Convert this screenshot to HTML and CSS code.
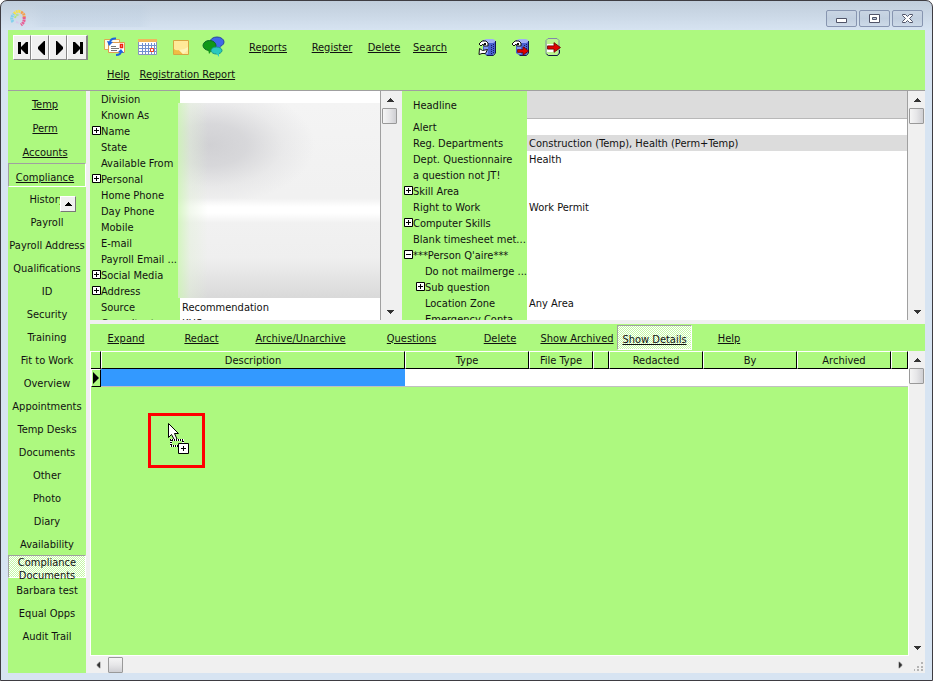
FILE: index.html
```html
<!DOCTYPE html>
<html lang="en">
<head>
<meta charset="utf-8">
<title>Compliance Documents</title>
<link rel="stylesheet" href="styles.css">
</head>
<body>
<svg class="defs" width="0" height="0" aria-hidden="true">
  <symbol id="up" viewBox="0 0 7 4"><path d="M3 0h1v1h1v1h1v1h1v1H0V3h1V2h1V1h1z"/></symbol>
  <symbol id="plus" viewBox="0 0 9 9"><path fill="#fff" stroke="#000" d="M.5.5h8v8h-8z"/><path d="M2 4h5v1H2zM4 2h1v5H4z"/></symbol>
  <symbol id="minus" viewBox="0 0 9 9"><path fill="#fff" stroke="#000" d="M.5.5h8v8h-8z"/><path d="M2 4h5v1H2z"/></symbol>
  <symbol id="db" viewBox="0 0 18 18">
    <path fill="#4860d0" d="M5 2h12v13l-2 2H8l-3-2z"/>
    <path fill="#8098f4" d="M6 4h4v12H8l-2-1z"/>
    <path fill="#a0b0f4" d="M6 2l2-1h7l2 1v2l-2 1H8L6 4z"/>
    <path stroke="#101850" fill="none" d="M17.500 3v12l-2 2.500h-7"/>
    <path stroke="#182060" stroke-dasharray="1 1" d="M15.500 6v10M13.500 7v10"/>
    <path fill="#fff" stroke="#111" d="M1 6l3-3h4l2 2v3H6L5 6 3 8z"/>
    <path fill="#111" d="M6 5h2v2H6z"/>
  </symbol>
  <symbol id="arrow" viewBox="0 0 13 10"><path fill="#e00000" stroke="#600" stroke-width=".8" d="M.5 3.500h6v-3l6 4.500-6 4.500v-3h-6z"/></symbol>
</svg>
<div class="window">
  <header class="titlebar">
    <svg class="logo" width="18" height="18" viewBox="0 0 18 18" fill="none" stroke-width="3" stroke-dasharray="2 .6">
      <path stroke="#f6e04c" d="M5 5Q8 1 12 3"/><path stroke="#f5a04c" d="M12 3Q16 5 15 9"/>
      <path stroke="#e85c94" d="M15 8Q16 13 12 16"/><path stroke="#84d0ec" d="M4 13Q1 9 5 5"/>
      <path stroke="#b4e480" stroke-width="2" d="M6 9Q7 5 10 6"/><path stroke="#d8c8ec" stroke-width="2" d="M7 13l3 1"/>
    </svg>
    <span class="caption-haze"></span>
    <div class="window-buttons">
      <button type="button" aria-label="Minimize"><svg width="13" height="11"><path fill="#fff" stroke="#505468" d="M1.500 5.500h10v4h-10z"/></svg></button>
      <button type="button" aria-label="Maximize"><svg width="13" height="11"><path fill="#fff" stroke="#505468" d="M1.500 1.500h10v8h-10z"/><path fill="#bccbdc" stroke="#505468" d="M4.500 4.500h4v2h-4z"/></svg></button>
      <button type="button" aria-label="Close"><svg width="13" height="11"><path fill="#fff" stroke="#505468" d="M1.500 1.500h3l2 2 2-2h3v1L8.500 5.500l3 3v1h-3l-2-2-2 2h-3v-1l3-3-3-3z"/></svg></button>
    </div>
  </header>

  <div class="toolbar">
    <div class="record-nav">
      <button type="button" aria-label="First record"><svg width="12" height="14"><path d="M1 1h3v5l5-5h2v12H9L4 8v5H1z"/></svg></button>
      <button type="button" aria-label="Previous record"><svg width="12" height="14"><path d="M10 0v14H9L3 8V6l6-6z"/></svg></button>
      <button type="button" aria-label="Next record"><svg width="12" height="14"><path d="M3 0v14h1l6-6V6L4 0z"/></svg></button>
      <button type="button" aria-label="Last record"><svg width="12" height="14"><path d="M11 1H8v5L3 1H1v12h2l5-5v5h3z"/></svg></button>
    </div>
    <nav class="main-tools">
      <button class="tool" type="button" aria-label="Mail">
        <svg width="22" height="20" viewBox="0 0 22 20"><path fill="#fffbe8" stroke="#e0a850" d="M.5 2.500h15v10H.5z"/><path fill="#fff" stroke="#e09a50" d="M4.500 5.500h16v10h-16z"/><path stroke="#777" d="M7 9.500h5M7 11.500h8M7 13.500h6"/><path fill="#fff" stroke="#f02010" stroke-width="1.500" d="M16.500 7.500h2v3h-2z"/><path fill="none" stroke="#1c64e0" stroke-width="2" d="M12 1.500Q7 1 6 5M12 18Q17 18 17 14"/><path fill="#1c64e0" d="M3 4l6 1-4 4zM14 15l3-3 3 4z"/></svg></button>
      <button class="tool" type="button" aria-label="Calendar">
        <svg width="20" height="16" viewBox="0 0 20 16"><path fill="#fff" stroke="#8894c0" d="M.5.5h18v15H.5z"/><path fill="#f0b85c" d="M0 0h19v3H0z"/><path stroke="#7090d0" d="M1 6.500h17M1 9.500h17M1 12.500h17M4.500 4v11M7.500 4v11M10.500 4v11M13.500 4v11M16.500 4v11"/><path fill="#fff" stroke="#f04020" d="M12.500 9.500h3v3h-3z"/></svg></button>
      <button class="tool" type="button" aria-label="Note">
        <svg width="16" height="15" viewBox="0 0 16 15"><path fill="#ffe998" stroke="#d6a640" d="M.5.500h15v14H.5z"/><path fill="#f0bc44" d="M1 9q2 2 5 1l4 4H1z"/><path fill="#fff4b8" d="M6 10q5 0 9-3v3l-5 4z"/></svg></button>
      <button class="tool" type="button" aria-label="Chat">
        <svg width="24" height="22" viewBox="0 0 24 22"><ellipse cx="15" cy="6" rx="7" ry="5" fill="#4068e8" stroke="#2848a0"/><path fill="#4068e8" d="M18 9l1 5-5-4z"/><ellipse cx="7.500" cy="9.500" rx="6.500" ry="5" fill="#109818" stroke="#0c6c28"/><path fill="#109818" d="M6 13l1 5 4-5z"/><ellipse cx="14.500" cy="14.500" rx="5.500" ry="3.500" fill="#28c8c0" stroke="#189088"/><path fill="#28c8c0" d="M14 17l3 4v-4z"/></svg></button>
      <a href="#">Reports</a><a href="#">Register</a><a href="#">Delete</a><a href="#">Search</a><span></span>
      <button class="tool" type="button" aria-label="Open database">
        <svg width="18" height="18"><use href="#db"/><path fill="#fff" stroke="#111" d="M1.500 10.500l3 2 5-1-2 4H4l-3 1z"/></svg></button>
      <button class="tool" type="button" aria-label="Send from database">
        <svg width="18" height="18"><use href="#db"/><use href="#arrow" x="6" y="8" width="12" height="10"/></svg></button>
      <button class="tool" type="button" aria-label="Log out">
        <svg width="16" height="18"><path fill="#baf48e" stroke="#8088a8" d="M3 .5h9l2 2v13l-2 2H3l-2-2v-13z"/><path fill="#fff" d="M2 6h9v8H2z"/><path fill="none" stroke="#101840" d="M14.500 12v3l-2 2.500h-9l-2-1.500"/><use href="#arrow" x="2" y="4" width="14" height="11"/></svg></button>
    </nav>
    <nav class="sub-tools"><a href="#">Help</a><a href="#">Registration Report</a></nav>
  </div>

  <div class="workspace">
    <nav class="sidebar">
      <a class="group" href="#">Temp</a>
      <a class="group" href="#">Perm</a>
      <a class="group" href="#">Accounts</a>
      <a class="group open" href="#">Compliance</a>
      <button class="raise" type="button" aria-label="Scroll up"><svg width="7" height="4"><use href="#up"/></svg></button>
      <a class="page" href="#">History</a>
      <a class="page" href="#">Payroll</a>
      <a class="page" href="#">Payroll Address</a>
      <a class="page" href="#">Qualifications</a>
      <a class="page" href="#">ID</a>
      <a class="page" href="#">Security</a>
      <a class="page" href="#">Training</a>
      <a class="page" href="#">Fit to Work</a>
      <a class="page" href="#">Overview</a>
      <a class="page" href="#">Appointments</a>
      <a class="page" href="#">Temp Desks</a>
      <a class="page" href="#">Documents</a>
      <a class="page" href="#">Other</a>
      <a class="page" href="#">Photo</a>
      <a class="page" href="#">Diary</a>
      <a class="page" href="#">Availability</a>
      <a class="page current" href="#">Compliance Documents</a>
      <a class="page" href="#">Barbara test</a>
      <a class="page" href="#">Equal Opps</a>
      <a class="page" href="#">Audit Trail</a>
    </nav>

    <main class="content">
      <div class="panels">
        <section class="panel person">
          <div class="viewport">
            <table class="props">
              <colgroup><col class="name-col"><col></colgroup>
              <tr><th scope="row">Division</th><td></td></tr>
              <tr><th scope="row">Known As</th><td></td></tr>
              <tr><th scope="row" class="node"><button type="button" aria-label="Expand"><svg width="9" height="9"><use href="#plus"/></svg></button>Name</th><td></td></tr>
              <tr><th scope="row">State</th><td></td></tr>
              <tr><th scope="row">Available From</th><td></td></tr>
              <tr><th scope="row" class="node"><button type="button" aria-label="Expand"><svg width="9" height="9"><use href="#plus"/></svg></button>Personal</th><td></td></tr>
              <tr><th scope="row">Home Phone</th><td></td></tr>
              <tr><th scope="row">Day Phone</th><td></td></tr>
              <tr><th scope="row">Mobile</th><td></td></tr>
              <tr><th scope="row">E-mail</th><td></td></tr>
              <tr><th scope="row">Payroll Email ...</th><td></td></tr>
              <tr><th scope="row" class="node"><button type="button" aria-label="Expand"><svg width="9" height="9"><use href="#plus"/></svg></button>Social Media</th><td></td></tr>
              <tr><th scope="row" class="node"><button type="button" aria-label="Expand"><svg width="9" height="9"><use href="#plus"/></svg></button>Address</th><td></td></tr>
              <tr><th scope="row">Source</th><td>Recommendation</td></tr>
              <tr><th scope="row">Consultant</th><td>KHS</td></tr>
            </table>
            <div class="redaction"></div>
          </div>
          <div class="vscroll">
            <button type="button" aria-label="Up"><svg width="7" height="4"><use href="#up"/></svg></button><span class="thumb"></span>
            <button class="down" type="button" aria-label="Down"><svg width="7" height="4"><use href="#up"/></svg></button>
          </div>
        </section>

        <section class="panel registration">
          <div class="viewport">
            <table class="props">
              <colgroup><col class="name-col"><col></colgroup>
              <tr class="headline"><th scope="row">Headline</th><td></td></tr>
              <tr><th scope="row">Alert</th><td></td></tr>
              <tr class="selected"><th scope="row">Reg. Departments</th><td>Construction (Temp), Health (Perm+Temp)</td></tr>
              <tr><th scope="row">Dept. Questionnaire</th><td>Health</td></tr>
              <tr><th scope="row">a question not JT!</th><td></td></tr>
              <tr><th scope="row" class="node"><button type="button" aria-label="Expand"><svg width="9" height="9"><use href="#plus"/></svg></button>Skill Area</th><td></td></tr>
              <tr><th scope="row">Right to Work</th><td>Work Permit</td></tr>
              <tr><th scope="row" class="node"><button type="button" aria-label="Expand"><svg width="9" height="9"><use href="#plus"/></svg></button>Computer Skills</th><td></td></tr>
              <tr><th scope="row">Blank timesheet met...</th><td></td></tr>
              <tr><th scope="row" class="node"><button type="button" aria-label="Collapse"><svg width="9" height="9"><use href="#minus"/></svg></button>***Person Q'aire***</th><td></td></tr>
              <tr class="child"><th scope="row">Do not mailmerge ...</th><td></td></tr>
              <tr class="child"><th scope="row" class="node"><button type="button" aria-label="Expand"><svg width="9" height="9"><use href="#plus"/></svg></button>Sub question</th><td></td></tr>
              <tr class="child"><th scope="row">Location Zone</th><td>Any Area</td></tr>
              <tr class="child"><th scope="row">Emergency Conta</th><td></td></tr>
            </table>
          </div>
          <div class="vscroll">
            <button type="button" aria-label="Up"><svg width="7" height="4"><use href="#up"/></svg></button><span class="thumb"></span>
            <button class="down" type="button" aria-label="Down"><svg width="7" height="4"><use href="#up"/></svg></button>
          </div>
        </section>
      </div>

      <section class="documents">
        <nav class="doc-tools">
          <a href="#">Expand</a><a href="#">Redact</a><a href="#">Archive/Unarchive</a><a href="#">Questions</a><a href="#">Delete</a><a href="#">Show Archived</a><a class="pressed" href="#">Show Details</a><a href="#">Help</a>
        </nav>
        <div class="doc-area">
          <div class="doc-main">
            <table class="doc-grid">
              <colgroup><col class="c-mark"><col><col class="c-type"><col class="c-file"><col class="c-flag"><col class="c-std"><col class="c-std"><col class="c-std"><col class="c-end"></colgroup>
              <thead><tr><th></th><th>Description</th><th>Type</th><th>File Type</th><th></th><th>Redacted</th><th>By</th><th>Archived</th><th></th></tr></thead>
              <tbody><tr><td class="marker"><svg width="8" height="12"><path d="M1 0v12l6-6z"/></svg></td><td class="active"></td><td></td><td></td><td></td><td></td><td></td><td></td><td></td></tr></tbody>
            </table>
            <div class="drop-target">
              <svg width="24" height="34" viewBox="0 0 24 34">
                <path fill="#fff" stroke="#000" d="M1.500 1.500v14l3-3 3 5.500 2.500-1-2.500-5.500h4z"/>
                <path fill="none" stroke="#fff" stroke-width="2" d="M3 18h13v6H4v-6"/>
                <path fill="none" stroke="#000" stroke-width="2" stroke-dasharray="1 1" d="M3 18h13v6H4v-6"/>
                <path fill="#fff" stroke="#000" d="M11.500 21.500h10v10h-10z"/><path d="M14 26h5v1h-5zM16 24h1v5h-1z"/>
              </svg>
            </div>
          </div>
          <div class="vscroll">
            <button type="button" aria-label="Up"><svg width="7" height="4"><use href="#up"/></svg></button><span class="thumb"></span>
            <button class="down" type="button" aria-label="Down"><svg width="7" height="4"><use href="#up"/></svg></button>
          </div>
          <div class="hscroll">
            <button class="left" type="button" aria-label="Left"><svg width="7" height="4"><use href="#up"/></svg></button><span class="thumb"></span>
            <button class="right" type="button" aria-label="Right"><svg width="7" height="4"><use href="#up"/></svg></button>
          </div>
          <div class="grip"><svg width="9" height="9" fill="#b4b4b4"><path d="M7 0h2v2H7zM7 4h2v2H7zM3 4h2v2H3zM7 7h2v2H7zM3 7h2v2H3zM0 7h1v2H0z"/></svg></div>
        </div>
      </section>
    </main>
  </div>
</div>
</body>
</html>
```
FILE: styles.css
```css
:root {
  --green: #adf97f;
  --face: #f0f0f0;
  --frame: #d7e4f2;
  --line: #a0a0a0;
}

* { box-sizing: border-box; }

body {
  margin: 0;
  background: #fff;
  color: #111;
  font: 11px/13px "DejaVu Sans Condensed", "Noto Sans", sans-serif;
}

button { margin: 0; padding: 0; border: 0; background: none; font: inherit; color: inherit; }
svg { display: block; }
a { color: inherit; }
.defs { position: absolute; }

.window {
  display: flex;
  flex-direction: column;
  min-height: 100vh;
  padding: 0 7px 7px;
  border: 1px solid #3e3c42;
  border-radius: 7px 7px 0 0;
  background: linear-gradient(#c0cddb, var(--frame) 30px);
}

/* Title bar */
.titlebar { display: flex; align-items: center; height: 29px; }
.logo { margin: 4px 0 0 1px; }
.caption-haze {
  width: 120px;
  height: 22px;
  margin-left: 5px;
  background: linear-gradient(90deg, transparent, rgb(180 200 220 / 20%) 10%, rgb(180 200 220 / 20%) 90%, transparent);
}
.window-buttons { display: flex; gap: 2px; margin: 6px 2px 0 auto; }
.window-buttons button {
  display: grid;
  place-items: center;
  width: 31px;
  height: 17px;
  border: 1px solid #8795b0;
  border-radius: 2px;
  background: linear-gradient(#c9d5e3, #c1cfdf 50%, #cddae8);
}

/* Toolbar */
.toolbar {
  display: grid;
  grid-template-columns: 90px 1fr;
  grid-template-rows: 34px 26px;
  border-bottom: 1px solid var(--line);
  background: var(--green);
}
.record-nav { display: flex; align-items: end; height: 30px; padding-left: 5px; }
.record-nav button {
  display: grid;
  place-items: center;
  width: 18px;
  height: 25px;
  padding-left: 2px;
  border: 1px solid;
  border-color: #fff #888 #888 #fff;
  background: var(--face);
}
.record-nav button:last-child { width: 21px; border-right-width: 2px; }
.main-tools {
  display: grid;
  grid-template-columns: repeat(4, 33px) 76px 52px 52px 40px 20px repeat(3, 33px);
  align-items: center;
  justify-items: center;
}
.sub-tools { grid-column: 2; display: flex; gap: 10px; padding: 4px 9px; }

/* Workspace */
.workspace {
  flex: 1;
  display: grid;
  grid-template-columns: 78px minmax(0, 1fr);
  gap: 4px;
  background: var(--face);
}
.sidebar { position: relative; background: var(--green); text-align: center; }
.sidebar a { display: block; white-space: nowrap; }
.group { height: 24px; padding: 7px 4px 0 0; }
.group.open {
  border: 1px solid;
  border-color: var(--line) #fff #fff var(--line);
}
.page { height: 23px; padding-top: 6px; text-decoration: none; }
.sidebar .current {
  padding: 0 8px;
  border: 1px solid;
  border-color: var(--line) #fff #fff var(--line);
  white-space: normal;
}
.current, .pressed { background: repeating-conic-gradient(#fff 0 25%, #c4f8a4 0 50%) 0 0 / 2px 2px; }
.raise {
  position: absolute;
  left: 52px;
  top: 105px;
  display: grid;
  place-items: center;
  width: 16px;
  height: 16px;
  border: 1px solid;
  border-color: #fff #777 #777 #fff;
  background: var(--face);
}

.content { display: flex; flex-direction: column; gap: 4px; }
.panels { display: grid; grid-template-columns: 308px minmax(0, 1fr); gap: 4px; height: 229px; }
.panel { display: flex; height: 229px; overflow: hidden; }
.viewport {
  position: relative;
  flex: 1;
  overflow: hidden;
  border-right: 1px solid var(--line);
  background: #fff;
}
.panel .vscroll { margin-left: 1px; }

.props { width: 100%; table-layout: fixed; border-collapse: separate; border-spacing: 0; white-space: nowrap; }
.props tr { height: 16px; }
.props th, .props td { padding: 0 0 0 2px; overflow: hidden; text-align: left; font-weight: normal; }
.props th { padding-left: 11px; background: var(--green); }
.props th.node { padding-left: 2px; }
.props th button { display: inline-block; vertical-align: 0; }
.props .child th { padding-left: 23px; }
.props .child th.node { padding-left: 14px; }
.props .headline { height: 28px; }
.props .headline td { border-bottom: 1px solid #b8b8b8; }
.headline td, .selected td { background: #dcdcdc; }
.person .name-col { width: 90px; }
.registration .name-col { width: 125px; }

.redaction {
  position: absolute;
  inset: 12px 0 22px 88px;
  background:
    linear-gradient(90deg, rgb(205 246 180 / 80%), rgb(225 240 215 / 45%) 12px, transparent 30px),
    linear-gradient(transparent 95px, #fff 104px, #fff 110px, transparent 120px),
    radial-gradient(ellipse 105px 60px at 32px 42px, rgb(200 200 204 / 80%), rgb(204 204 208 / 70%) 35%, rgb(220 220 222 / 40%) 70%, transparent),
    linear-gradient(#f4f4f4, #f1f1f1 90px, #f1f1f1 120px, #efefef 155px, #d9d9d9);
}

/* Scroll bars */
.vscroll { display: flex; flex-direction: column; width: 16px; background: var(--face); }
.vscroll button, .hscroll button { display: grid; place-items: center; width: 16px; height: 17px; fill: #333; }
.thumb {
  width: 15px;
  height: 16px;
  border: 1px solid #999;
  border-radius: 1px;
  background: linear-gradient(90deg, #f5f5f5, #e6e6e8 50%, #cfcfd3);
}
.hscroll { display: flex; align-items: center; background: var(--face); }
.hscroll .thumb { margin-left: 2px; background: linear-gradient(#f5f5f5, #e6e6e8 50%, #cfcfd3); }
.down { margin-top: auto; }
.down svg { transform: rotate(180deg); }
.left svg { transform: rotate(-90deg); }
.right { margin-left: auto; }
.right svg { transform: rotate(90deg); }

/* Documents */
.documents { flex: 1; display: flex; flex-direction: column; background: var(--green); }
.doc-tools {
  display: grid;
  grid-template-columns: 72px 79px 119px 103px 74px 80px 75px 74px;
  align-items: center;
  justify-items: center;
  height: 27px;
  padding-top: 1px;
  white-space: nowrap;
}
.pressed {
  align-self: stretch;
  justify-self: stretch;
  margin-bottom: 1px;
  padding-top: 7px;
  border: 1px solid;
  border-color: var(--line) #fff #fff var(--line);
  text-align: center;
}
.doc-area { flex: 1; display: grid; grid-template-columns: minmax(0, 1fr) 17px; grid-template-rows: 1fr 17px; }
.doc-area .vscroll { width: 17px; border-left: 1px solid #fff; }
.doc-main { position: relative; border-bottom: 1px solid #fff; border-left: 1px solid #fff; }
.doc-grid { width: 100%; table-layout: fixed; border-collapse: separate; border-spacing: 0; }
.doc-grid th {
  height: 18px;
  padding: 0;
  border: 1px solid;
  border-color: #fff #000 #000 #fff;
  font-weight: normal;
}
.doc-grid th:first-child { border-left: 0; }
.doc-grid td { height: 18px; padding: 0; border-bottom: 1px solid #c0c0c0; background: #fff; }
.doc-grid .marker { border: 1px solid; border-color: #fff #000 #000 #fff; background: var(--green); }
.doc-grid .active { background: #3399ff; }
.c-mark { width: 10px; }
.c-type { width: 124px; }
.c-file { width: 64px; }
.c-flag { width: 16px; }
.c-std { width: 94px; }
.c-end { width: 17px; }
.drop-target {
  position: absolute;
  left: 57px;
  top: 62px;
  width: 57px;
  height: 55px;
  padding: 6px 16px;
  border: 3px solid #f00;
}
.grip { display: grid; place-items: end; padding: 0 2px 2px 0; background: var(--face); }
```
